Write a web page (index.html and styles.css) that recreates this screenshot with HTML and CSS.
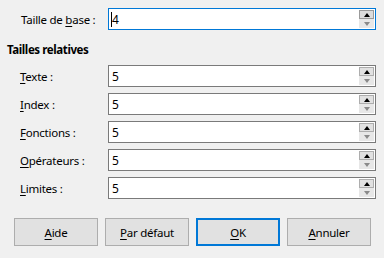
FILE: index.html
```html
<!DOCTYPE html>
<html lang="fr">
<head>
<meta charset="utf-8">
<link rel="stylesheet" href="styles.css">
</head>
<body>
<div class="dialog">
  <div class="row base">
    <label class="lbl">Taille de <u>b</u>ase :</label>
    <div class="field focus"><span class="val"><span class="caret"></span>4</span><div class="spin"><div class="up hot"><i class="tri up-tri"></i></div><div class="down"><i class="tri down-tri"></i></div></div></div>
  </div>
  <div class="heading">Tailles relatives</div>
  <div class="rows">
    <div class="row"><label class="lbl"><u>T</u>exte :</label><div class="field"><span class="val">5</span><div class="spin"><div class="up"><i class="tri up-tri"></i></div><div class="down"><i class="tri down-tri"></i></div></div></div></div>
    <div class="row"><label class="lbl"><u>I</u>ndex :</label><div class="field"><span class="val">5</span><div class="spin"><div class="up"><i class="tri up-tri"></i></div><div class="down"><i class="tri down-tri"></i></div></div></div></div>
    <div class="row"><label class="lbl"><u>F</u>onctions :</label><div class="field"><span class="val">5</span><div class="spin"><div class="up"><i class="tri up-tri"></i></div><div class="down"><i class="tri down-tri"></i></div></div></div></div>
    <div class="row"><label class="lbl"><u>O</u>pérateurs :</label><div class="field"><span class="val">5</span><div class="spin"><div class="up"><i class="tri up-tri"></i></div><div class="down"><i class="tri down-tri"></i></div></div></div></div>
    <div class="row"><label class="lbl"><u>L</u>imites :</label><div class="field"><span class="val">5</span><div class="spin"><div class="up"><i class="tri up-tri"></i></div><div class="down"><i class="tri down-tri"></i></div></div></div></div>
  </div>
  <div class="buttons">
    <button class="btn"><u>A</u>ide</button>
    <button class="btn"><u>P</u>ar défaut</button>
    <button class="btn default"><u>O</u>K</button>
    <button class="btn"><u>A</u>nnuler</button>
  </div>
</div>
</body>
</html>
```
FILE: styles.css
```css
html, body {
  margin: 0;
  padding: 0;
  background: #f0f0f0;
}
body {
  width: 384px;
  height: 258px;
  overflow: hidden;
  font-family: "Noto Sans", "Open Sans", sans-serif;
  font-size: 11.5px;
  letter-spacing: -0.25px;
  color: #000;
}
.dialog {
  padding-top: 8px;
}
u {
  text-decoration: underline;
  text-underline-offset: 2px;
}
.row {
  display: flex;
  align-items: center;
  height: 22px;
}
.base {
  padding-left: 21px;
}
.base .lbl {
  width: 87px;
}
.heading {
  font-weight: bold;
  letter-spacing: -0.4px;
  padding-left: 7px;
  margin-top: 10px;
  height: 20px;
  line-height: 20px;
}
.rows {
  margin-top: 5px;
  display: flex;
  flex-direction: column;
  gap: 6px;
  padding-left: 20px;
}
.rows .lbl {
  width: 88px;
}
.field {
  box-sizing: border-box;
  width: 268px;
  height: 22px;
  border: 1px solid #7a7a7a;
  background: #fff;
  display: flex;
  align-items: center;
  justify-content: space-between;
  padding: 0 1px 0 3px;
}
.field.focus {
  border-color: #0078d7;
}
.val {
  font-size: 12px;
  position: relative;
}
.caret {
  position: absolute;
  left: -1px;
  top: 1px;
  width: 1px;
  height: 15px;
  background: #000;
}
.spin {
  display: flex;
  flex-direction: column;
  width: 15px;
  height: 18px;
}
.spin > div {
  flex: 1;
  box-sizing: border-box;
  display: flex;
  align-items: center;
  justify-content: center;
  background: #e7e7e7;
  border: 1px solid #e7e7e7;
}
.spin .up {
  background: #e1e1e1;
  border-color: #adadad;
}
.spin .up.hot {
  border-color: #9a9a9a;
  background: #dcdcdc;
}
.tri {
  width: 0;
  height: 0;
  border-left: 3.5px solid transparent;
  border-right: 3.5px solid transparent;
}
.up-tri {
  border-bottom: 4px solid #000;
}
.down-tri {
  border-top: 4px solid #8a8a8a;
}
.buttons {
  display: flex;
  gap: 7px;
  padding-left: 14px;
  margin-top: 19px;
}
.btn {
  box-sizing: border-box;
  width: 84px;
  height: 28px;
  border: 1px solid #adadad;
  background: #e1e1e1;
  font-family: inherit;
  font-size: 11.5px;
  letter-spacing: -0.25px;
  color: #000;
  padding: 0;
}
.btn.default {
  border: 2px solid #0078d7;
}
```
